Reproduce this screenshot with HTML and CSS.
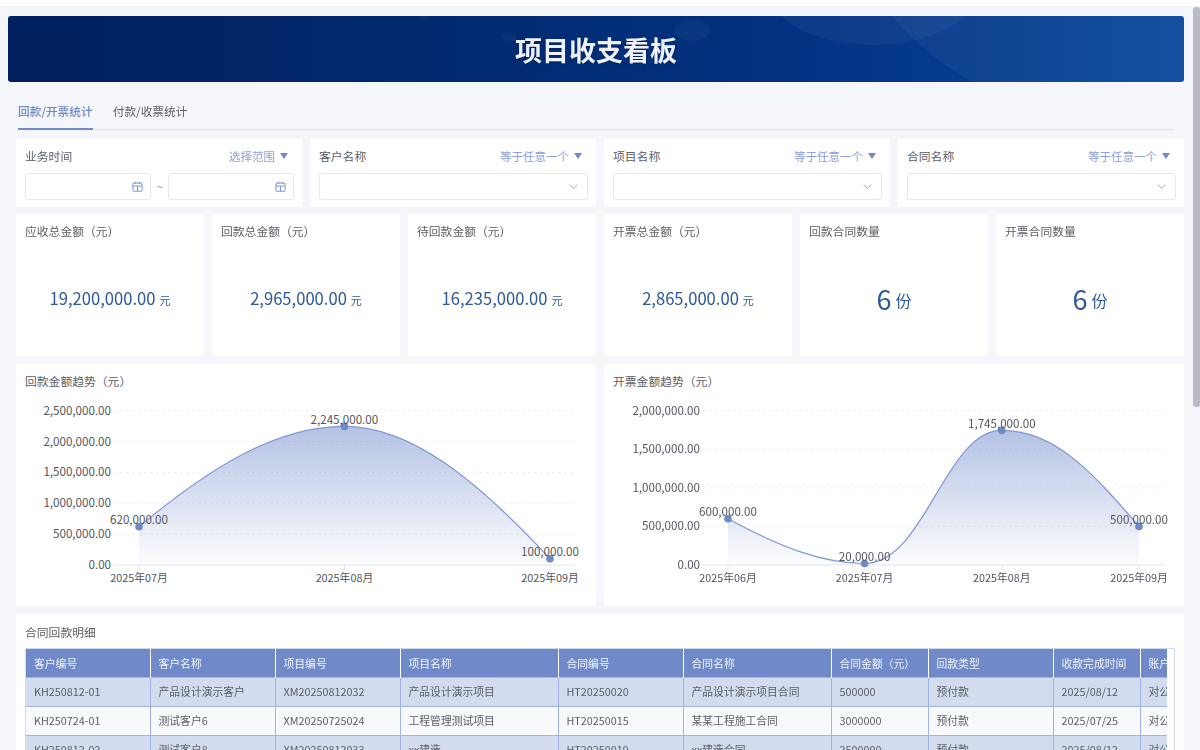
FILE: index.html
```html
<!DOCTYPE html>
<html lang="zh-CN">
<head>
<meta charset="utf-8">
<title>项目收支看板</title>
<link rel="stylesheet" href="styles.css">
</head>
<body>
<div class="topstrip"></div>
<main class="page">
  <header class="banner">
    <svg class="banner-deco" viewBox="0 0 1176 66" preserveAspectRatio="none" aria-hidden="true">
      <circle cx="416" cy="0" r="5" fill="#ffffff" opacity=".03"/>
      <ellipse cx="501" cy="21" rx="8" ry="5" fill="#ffffff" opacity=".03"/>
      <ellipse cx="684" cy="15" rx="18" ry="10" fill="#ffffff" opacity=".035"/>
      <ellipse cx="865" cy="-30" rx="107" ry="59" fill="#ffffff" opacity=".04"/>
      <circle cx="1100" cy="-180" r="281" fill="#ffffff" opacity=".045"/>
    </svg>
    <h1 class="banner-title">项目收支看板</h1>
  </header>

  <section class="panel">
    <nav class="tabs">
      <span class="tab tab-active">回款/开票统计</span>
      <span class="tab">付款/收票统计</span>
    </nav>
  </section>

  <section class="filters">
    <div class="card filter">
      <div class="filter-head"><span>业务时间</span><span class="filter-mode">选择范围<i class="caret"></i></span></div>
      <div class="date-range">
        <div class="field">
          <svg class="cal" viewBox="0 0 12 12" aria-hidden="true"><rect x="1" y="2.2" width="10" height="9" rx="1.2"/><path d="M1 5.4h10M4 .8v2.6M8 .8v2.6M6 5.4v5.8"/></svg>
        </div>
        <span class="tilde">~</span>
        <div class="field">
          <svg class="cal" viewBox="0 0 12 12" aria-hidden="true"><rect x="1" y="2.2" width="10" height="9" rx="1.2"/><path d="M1 5.4h10M4 .8v2.6M8 .8v2.6M6 5.4v5.8"/></svg>
        </div>
      </div>
    </div>
    <div class="card filter">
      <div class="filter-head"><span>客户名称</span><span class="filter-mode">等于任意一个<i class="caret"></i></span></div>
      <div class="field"><svg class="chev" viewBox="0 0 12 8" preserveAspectRatio="none" aria-hidden="true"><path d="M1 1l5 6 5-6"/></svg></div>
    </div>
    <div class="card filter">
      <div class="filter-head"><span>项目名称</span><span class="filter-mode">等于任意一个<i class="caret"></i></span></div>
      <div class="field"><svg class="chev" viewBox="0 0 12 8" preserveAspectRatio="none" aria-hidden="true"><path d="M1 1l5 6 5-6"/></svg></div>
    </div>
    <div class="card filter">
      <div class="filter-head"><span>合同名称</span><span class="filter-mode">等于任意一个<i class="caret"></i></span></div>
      <div class="field"><svg class="chev" viewBox="0 0 12 8" preserveAspectRatio="none" aria-hidden="true"><path d="M1 1l5 6 5-6"/></svg></div>
    </div>
  </section>

  <section class="kpis">
    <div class="card kpi"><div class="card-title">应收总金额（元）</div><div class="kpi-value"><b>19,200,000.00</b><small>元</small></div></div>
    <div class="card kpi"><div class="card-title">回款总金额（元）</div><div class="kpi-value"><b>2,965,000.00</b><small>元</small></div></div>
    <div class="card kpi"><div class="card-title">待回款金额（元）</div><div class="kpi-value"><b>16,235,000.00</b><small>元</small></div></div>
    <div class="card kpi"><div class="card-title">开票总金额（元）</div><div class="kpi-value"><b>2,865,000.00</b><small>元</small></div></div>
    <div class="card kpi"><div class="card-title">回款合同数量</div><div class="kpi-value kpi-count"><b>6</b><small>份</small></div></div>
    <div class="card kpi"><div class="card-title">开票合同数量</div><div class="kpi-value kpi-count"><b>6</b><small>份</small></div></div>
  </section>

  <section class="charts">
    <div class="card chart">
      <div class="card-title">回款金额趋势（元）</div>
      <svg class="plot" viewBox="16 396 580 210" aria-label="回款金额趋势">
        <defs>
          <linearGradient id="fillA" x1="0" y1="0" x2="0" y2="1">
            <stop offset="0" stop-color="#6f89c9" stop-opacity=".52"/>
            <stop offset="1" stop-color="#6f89c9" stop-opacity=".02"/>
          </linearGradient>
        </defs>
        <g class="grid">
          <path d="M114 410.7H575M114 441.6H575M114 472.4H575M114 503.3H575M114 534.1H575"/>
        </g>
        <path class="axis" d="M114 565H575M139 565v5M344.4 565v5M550 565v5"/>
        <path fill="url(#fillA)" d="M139 526.7C212 466 277 426.4 344.4 426.4C410 426.4 475 478 550 558.8V565H139Z"/>
        <path class="line" d="M139 526.7C212 466 277 426.4 344.4 426.4C410 426.4 475 478 550 558.8"/>
        <circle class="dot" cx="139" cy="526.7" r="3.8"/><circle class="dot" cx="344.4" cy="426.4" r="3.8"/><circle class="dot" cx="550" cy="558.8" r="3.8"/>
        <g class="ylab">
          <text x="111" y="414.7">2,500,000.00</text><text x="111" y="445.6">2,000,000.00</text><text x="111" y="476.4">1,500,000.00</text><text x="111" y="507.3">1,000,000.00</text><text x="111" y="538.1">500,000.00</text><text x="111" y="569">0.00</text>
        </g>
        <g class="clab">
          <text class="xlab" x="139" y="581.5">2025年07月</text><text class="xlab" x="344.4" y="581.5">2025年08月</text><text class="xlab" x="550" y="581.5">2025年09月</text>
          <text x="344.4" y="424">2,245,000.00</text><text x="139" y="524">620,000.00</text><text x="550" y="556">100,000.00</text>
        </g>
      </svg>
    </div>
    <div class="card chart">
      <div class="card-title">开票金额趋势（元）</div>
      <svg class="plot" viewBox="604 396 580 210" aria-label="开票金额趋势">
        <defs>
          <linearGradient id="fillB" gradientUnits="userSpaceOnUse" x1="0" y1="430" x2="0" y2="565">
            <stop offset="0" stop-color="#6f89c9" stop-opacity=".52"/>
            <stop offset="1" stop-color="#6f89c9" stop-opacity=".02"/>
          </linearGradient>
        </defs>
        <g class="grid">
          <path d="M703 410.7H1164.5M703 449.3H1164.5M703 487.9H1164.5M703 526.4H1164.5"/>
        </g>
        <path class="axis" d="M703 565H1164.5M728 565v5M864.6 565v5M1001.8 565v5M1139 565v5"/>
        <path fill="url(#fillB)" d="M728 518.7C782 548 824 563.5 864.6 563.5C925 563.5 945 430.4 1001.8 430.4C1057 430.4 1095 476 1139 526.4V565H728Z"/>
        <path class="line" d="M728 518.7C782 548 824 563.5 864.6 563.5C925 563.5 945 430.4 1001.8 430.4C1057 430.4 1095 476 1139 526.4"/>
        <circle class="dot" cx="728" cy="518.7" r="3.8"/><circle class="dot" cx="864.6" cy="563.5" r="3.8"/><circle class="dot" cx="1001.8" cy="430.4" r="3.8"/><circle class="dot" cx="1139" cy="526.4" r="3.8"/>
        <g class="ylab">
          <text x="700" y="414.7">2,000,000.00</text><text x="700" y="453.3">1,500,000.00</text><text x="700" y="491.9">1,000,000.00</text><text x="700" y="530.4">500,000.00</text><text x="700" y="569">0.00</text>
        </g>
        <g class="clab">
          <text class="xlab" x="728" y="581.5">2025年06月</text><text class="xlab" x="864.6" y="581.5">2025年07月</text><text class="xlab" x="1001.8" y="581.5">2025年08月</text><text class="xlab" x="1139" y="581.5">2025年09月</text>
          <text x="1001.8" y="428">1,745,000.00</text><text x="728" y="516">600,000.00</text><text x="864.6" y="561">20,000.00</text><text x="1139" y="524">500,000.00</text>
        </g>
      </svg>
    </div>
  </section>

  <section class="card detail">
    <div class="card-title">合同回款明细</div>
    <div class="table-frame">
      <div class="table-scroll">
        <table class="grid-table">
          <colgroup>
            <col class="c124"><col class="c125"><col class="c125"><col class="c158"><col class="c125"><col class="c148"><col class="c97"><col class="c125"><col class="c87"><col class="c100">
          </colgroup>
          <thead>
            <tr><th>客户编号</th><th>客户名称</th><th>项目编号</th><th>项目名称</th><th>合同编号</th><th>合同名称</th><th>合同金额（元）</th><th>回款类型</th><th>收款完成时间</th><th>账户类型</th></tr>
          </thead>
          <tbody>
            <tr><td>KH250812-01</td><td>产品设计演示客户</td><td>XM20250812032</td><td>产品设计演示项目</td><td>HT20250020</td><td>产品设计演示项目合同</td><td>500000</td><td>预付款</td><td>2025/08/12</td><td>对公</td></tr>
            <tr><td>KH250724-01</td><td>测试客户6</td><td>XM20250725024</td><td>工程管理测试项目</td><td>HT20250015</td><td>某某工程施工合同</td><td>3000000</td><td>预付款</td><td>2025/07/25</td><td>对公</td></tr>
            <tr><td>KH250812-02</td><td>测试客户8</td><td>XM20250812033</td><td>xx建造</td><td>HT20250019</td><td>xx建造合同</td><td>2500000</td><td>预付款</td><td>2025/08/12</td><td>对公</td></tr>
          </tbody>
        </table>
      </div>
    </div>
  </section>
</main>
<div class="scroll-thumb"></div>
</body>
</html>
```

FILE: styles.css
```css
* { box-sizing: border-box; }
html, body { margin: 0; height: 750px; overflow: hidden; }
body {
  background: #f4f6fa;
  color: #5a5e66;
  font: 11.8px/1.5 "Noto Sans CJK SC", "Noto Sans", sans-serif;
  position: relative;
}
.topstrip { height: 7px; background: #fff; border-bottom: 1px solid #eef0f4; }
.page { padding: 9px 8px 0 8px; width: 1192px; display: flex; flex-direction: column; filter: blur(.3px); }

.banner {
  position: relative;
  height: 66px;
  border-radius: 3px;
  overflow: hidden;
  background: linear-gradient(90deg, #01205f 0%, #022a70 40%, #033384 68%, #0b479c 100%);
  display: flex;
  align-items: center;
  justify-content: center;
}
.banner-deco { position: absolute; inset: 0; width: 100%; height: 100%; }
.banner-title {
  position: relative;
  margin: 0;
  color: #eef1f8;
  font-size: 27px;
  font-weight: 700;
  line-height: 1;
  text-shadow: 0 1px 2px rgba(0, 0, 0, .25);
}

.panel { margin-top: 10px; padding: 0 9px 0 10px; }
.tabs { display: flex; gap: 20px; height: 38px; border-bottom: 1px solid #dfe1e7; }
.tab { height: 38px; line-height: 37px; color: #5f6368; font-size: 11.7px; }
.tab-active { color: #7089c9; border-bottom: 2px solid #7089c9; font-weight: 500; }

.card { background: #fff; }
.card-title { color: #5a5e66; line-height: 18px; }

.filters { margin: 9px 0 0 8px; display: grid; grid-template-columns: repeat(4, 1fr); gap: 8px; height: 67px; }
.filter { padding: 8px 8px 7px 9px; display: flex; flex-direction: column; gap: 8px; }
.filter-head { display: flex; justify-content: space-between; height: 18px; line-height: 18px; padding-right: 6px; color: #5a5e66; }
.filter-mode { color: #8ea1d8; display: flex; align-items: center; gap: 5px; font-size: 11.5px; }
.caret { width: 0; height: 0; border-left: 4.5px solid transparent; border-right: 4.5px solid transparent; border-top: 6px solid #6f89c9; }
.field {
  flex: 1;
  height: 27px;
  border: 1px solid #e6e8ee;
  border-radius: 3px;
  background: #fff;
  display: flex;
  align-items: center;
  justify-content: flex-end;
  padding-right: 7px;
}
.date-range { display: flex; align-items: center; }
.tilde { width: 17px; text-align: center; color: #8a8d93; font-size: 11px; }
.cal { width: 11px; height: 11px; fill: none; stroke: #7f97d3; stroke-width: 1.1; }
.chev { width: 9px; height: 5px; fill: none; stroke: #7f97d3; stroke-width: 1.2; margin-right: 2px; }

.kpis { margin: 8px 0 0 8px; display: grid; grid-template-columns: repeat(6, 1fr); gap: 8px; height: 142px; }
.kpi { padding: 8px 9px; display: flex; flex-direction: column; }
.kpi-value { flex: 1; display: flex; align-items: center; justify-content: center; color: #2f5a9a; gap: 4px; padding-top: 8px; }
.kpi-value b { font-weight: 400; font-size: 16.6px; line-height: 1; }
.kpi-value small { font-size: 11px; padding-top: 4px; }
.kpi-count { gap: 4px; }
.kpi-count b { font-size: 27px; }
.kpi-count small { font-size: 16px; padding-top: 4px; }

.charts { margin: 8px 0 0 8px; display: grid; grid-template-columns: repeat(2, 1fr); gap: 8px; height: 242px; }
.chart { padding: 8px 9px 0; position: relative; }
.plot { position: absolute; left: 0; top: 32px; width: 580px; height: 210px; display: block; }
.grid path { fill: none; stroke: #eef0f3; stroke-dasharray: 3 3; }
.axis { fill: none; stroke: #e0e6f1; }
.line { fill: none; stroke: #7f97d6; stroke-width: 1.2; }
.dot { fill: #6f89c9; }
.plot text { font: 11.6px "Noto Sans CJK SC", "Noto Sans", sans-serif; fill: #51555e; }
.ylab text { text-anchor: end; }
.clab text { text-anchor: middle; }
.plot .xlab { font-size: 10.8px; }

.detail { margin: 8px 0 0 8px; padding: 9px 9px 0; height: 200px; }
.table-frame { margin-top: 7px; border: 1px solid #cfd8f0; padding-right: 7px; height: 180px; overflow: hidden; }
.table-scroll { overflow: hidden; }
.grid-table { table-layout: fixed; border-collapse: collapse; width: 1214px; font-size: 10.8px; }
.c124 { width: 124px; }
.c125 { width: 125px; }
.c158 { width: 158px; }
.c148 { width: 148px; }
.c97 { width: 97px; }
.c87 { width: 87px; }
.c100 { width: 100px; }
.grid-table th, .grid-table td { padding: 0 8px; text-align: left; white-space: nowrap; overflow: hidden; font-weight: 400; }
.grid-table th { height: 28px; background: #6f89c9; color: #f3f5fb; border-left: 1px solid #fff; border-right: 1px solid #fff; }
.grid-table th:first-child { border-left: 0; }
.grid-table td { height: 29px; color: #5a5e66; border: 1px solid #a0b3e6; }
.grid-table td:first-child { border-left: 0; }
.grid-table tbody tr:nth-child(odd) td { background: #d3dbef; }
.grid-table tbody tr:nth-child(even) td { background: #f7f9fd; }

.scroll-thumb { position: absolute; right: 0; top: 7px; width: 7px; height: 400px; background: #b9bcc4; border-radius: 3px; }
```
